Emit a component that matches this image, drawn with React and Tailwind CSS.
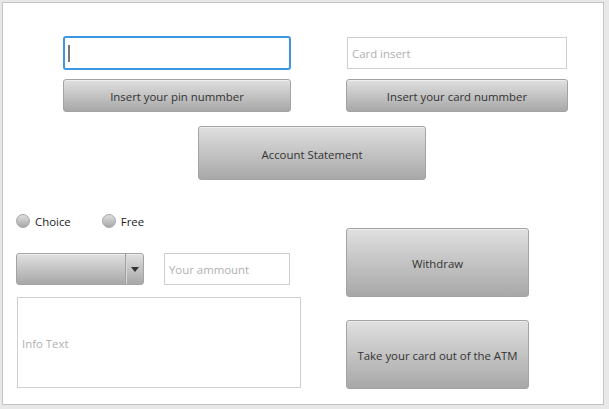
export default function App() {
  const font = { fontFamily: '"Open Sans", "Noto Sans", sans-serif' };
  const btn =
    "flex items-center justify-center rounded-[3px] border border-[#a3a3a3] bg-gradient-to-b from-[#e0e0e0] to-[#a8a8a8] pt-[3px] text-[11.4px] text-[#333333] shadow-[inset_0_1px_0_#eeeeee]";
  const input =
    "flex items-center border border-[#cfcfcf] bg-white pl-[4px] pt-[2px] text-[11.4px] text-[#b0b0b0]";
  const radio =
    "h-[14px] w-[14px] rounded-full border border-[#a6a6a6] bg-gradient-to-b from-[#dedede] to-[#a9a9a9]";
  return (
    <div className="h-[409px] w-[609px] bg-[#e8e8e8] pl-[2px] pt-[2px]" style={font}>
      <div className="flex h-[403px] w-[602px] flex-col border border-[#c4c4c4] bg-white">
        {/* Row 1 */}
        <div className="ml-[60px] mt-[33px] flex">
          <div className="flex w-[228px] flex-col">
            <div className="flex h-[34px] items-center rounded-[3px] border-2 border-[#3d97e3] bg-white pl-[3px]">
              <div className="h-[17px] w-[2px] bg-[#777777]" />
            </div>
            <div className={btn + " mt-[9px] h-[33px]"}>Insert your pin nummber</div>
          </div>
          <div className="ml-[55px] flex w-[222px] flex-col">
            <div className={input + " mx-[1px] mt-[1px] h-[32px]"}>Card insert</div>
            <div className={btn + " mt-[10px] h-[33px]"}>Insert your card nummber</div>
          </div>
        </div>
        {/* Row 2 */}
        <div className={btn + " ml-[195px] mt-[14px] h-[54px] w-[228px]"}>Account Statement</div>
        {/* Row 3 */}
        <div className="mt-[34px] flex items-start">
          <div className="ml-[13px] flex w-[285px] flex-col">
            <div className="flex h-[14px] items-center pt-[2px] text-[11.4px] text-[#222222]">
              <div className={radio + " -mt-[2px]"} />
              <span className="ml-[5px]">Choice</span>
              <div className={radio + " -mt-[2px] ml-[31px]"} />
              <span className="ml-[5px]">Free</span>
            </div>
            <div className="mt-[25px] flex">
              <div className="flex h-[32px] w-[128px] rounded-[3px] border border-[#a3a3a3] bg-gradient-to-b from-[#e0e0e0] to-[#a8a8a8] shadow-[inset_0_1px_0_#eeeeee]">
                <div className="flex-1 border-r border-[#a0a0a0]" />
                <div className="flex w-[17px] items-center justify-center border-l border-[#d8d8d8]">
                  <svg width="8" height="5" viewBox="0 0 8 5">
                    <path d="M0 0 L8 0 L4 5 Z" fill="#333333" />
                  </svg>
                </div>
              </div>
              <div className={input + " ml-[20px] h-[32px] w-[126px]"}>Your ammount</div>
            </div>
            <div className={input + " ml-[1px] mt-[12px] h-[91px] w-[284px] pl-[3px]"}>Info Text</div>
          </div>
          <div className="ml-[45px] mt-[14px] flex w-[183px] flex-col">
            <div className={btn + " h-[69px]"}>Withdraw</div>
            <div className={btn + " mt-[23px] h-[69px]"}>Take your card out of the ATM</div>
          </div>
        </div>
      </div>
    </div>
  );
}
